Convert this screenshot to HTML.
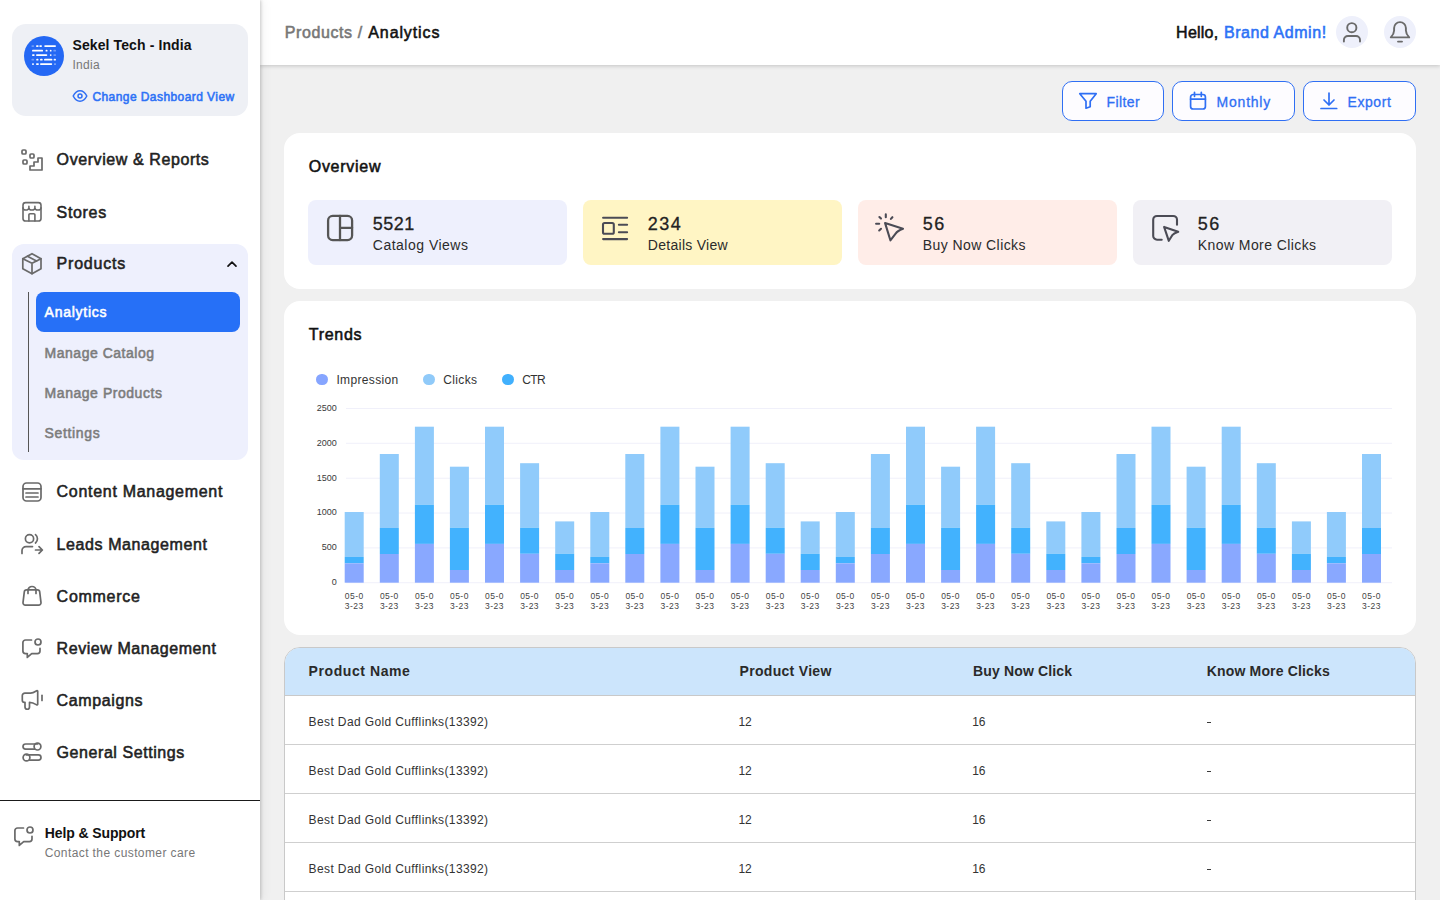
<!DOCTYPE html>
<html><head><meta charset="utf-8"><title>Products / Analytics</title>
<style>
html,body{margin:0;padding:0;width:1440px;height:900px;overflow:hidden;background:#f0f0f0;font-family:"Liberation Sans",sans-serif}
.t{position:absolute;white-space:nowrap}
.b{position:absolute}
.yl{font-family:"Liberation Sans",sans-serif;font-size:9px;fill:#3a3a3a}
.xl{font-family:"Liberation Sans",sans-serif;font-size:8.5px;letter-spacing:0.45px;fill:#444}
</style></head><body>
<div class="b" style="left:0px;top:0px;width:260px;height:900px;background:#fff;box-shadow:1px 0 3px rgba(0,0,0,0.18), 3px 0 10px rgba(0,0,0,0.06);z-index:2"></div>
<div style="position:absolute;left:0;top:0;width:260px;height:900px;z-index:3">
<div class="b" style="left:12px;top:24px;width:236px;height:92px;background:#eef0f5;border-radius:14px"></div>
<div class="b" style="left:24px;top:36px;width:40px;height:40px;background:#2468f4;border-radius:50%"></div>
<svg class="b" style="left:24px;top:36px;" width="40" height="40" viewBox="0 0 40 40" fill="none"><path d="M9.3 10.1H8.3" stroke="#fff" stroke-width="1.8" stroke-linecap="round" opacity="0.35"/><path d="M12.9 10.1H13.8" stroke="#fff" stroke-width="1.8" stroke-linecap="round" opacity="1"/><path d="M16.2 10.1H17.1" stroke="#fff" stroke-width="1.8" stroke-linecap="round" opacity="1"/><path d="M21.1 10.1H31.1" stroke="#fff" stroke-width="1.8" stroke-linecap="round" opacity="1"/><path d="M8.9 14.7H18.2" stroke="#fff" stroke-width="1.8" stroke-linecap="round" opacity="1"/><path d="M22.7 14.7H22.4" stroke="#fff" stroke-width="1.8" stroke-linecap="round" opacity="1"/><path d="M26.7 14.7H26.7" stroke="#fff" stroke-width="1.8" stroke-linecap="round" opacity="1"/><path d="M31.2 14.7H30.2" stroke="#fff" stroke-width="1.8" stroke-linecap="round" opacity="0.35"/><path d="M8.9 19.1H9.8" stroke="#fff" stroke-width="1.8" stroke-linecap="round" opacity="1"/><path d="M12.9 19.1H22.4" stroke="#fff" stroke-width="1.8" stroke-linecap="round" opacity="1"/><path d="M26.7 19.1H26.7" stroke="#fff" stroke-width="1.8" stroke-linecap="round" opacity="1"/><path d="M31.2 19.1H30.2" stroke="#fff" stroke-width="1.8" stroke-linecap="round" opacity="0.35"/><path d="M9.3 23.7H8.3" stroke="#fff" stroke-width="1.8" stroke-linecap="round" opacity="0.35"/><path d="M13.6 23.7H13.1" stroke="#fff" stroke-width="1.8" stroke-linecap="round" opacity="1"/><path d="M16.9 23.7H17.8" stroke="#fff" stroke-width="1.8" stroke-linecap="round" opacity="1"/><path d="M20.9 23.7H27.5" stroke="#fff" stroke-width="1.8" stroke-linecap="round" opacity="1"/><path d="M30.5 23.7H31.1" stroke="#fff" stroke-width="1.8" stroke-linecap="round" opacity="1"/><path d="M8.9 28.1H9.1" stroke="#fff" stroke-width="1.8" stroke-linecap="round" opacity="1"/><path d="M12.9 28.1H14.0" stroke="#fff" stroke-width="1.8" stroke-linecap="round" opacity="1"/><path d="M16.9 28.1H27.3" stroke="#fff" stroke-width="1.8" stroke-linecap="round" opacity="1"/><path d="M30.9 28.1H31.1" stroke="#fff" stroke-width="1.8" stroke-linecap="round" opacity="0.5"/></svg>
<div class="t" style="left:72.5px;top:36.05px;font-size:14px;line-height:18px;font-weight:700;color:#111;letter-spacing:0.106px;">Sekel Tech - India</div>
<div class="t" style="left:72.4px;top:57.74px;font-size:12px;line-height:15px;font-weight:400;color:#777;letter-spacing:0.3px;">India</div>
<svg class="b" style="left:72px;top:89px;" width="16" height="14" viewBox="0 0 16 14" fill="none"><path d="M1.2 7C3 3.4 5.3 1.8 8 1.8S13 3.4 14.8 7C13 10.6 10.7 12.2 8 12.2S3 10.6 1.2 7Z" stroke="#2f6ff4" stroke-width="1.5"/><circle cx="8" cy="7" r="2" stroke="#2f6ff4" stroke-width="1.5"/></svg>
<div class="t" style="left:92.4px;top:89.74px;font-size:12px;line-height:15px;font-weight:400;-webkit-text-stroke:0.55px #2d72f6;color:#2d72f6;letter-spacing:0.43px;">Change Dashboard View</div>
<svg class="b" style="left:18px;top:146px;" width="30" height="30" viewBox="0 0 30 30" fill="none"><g stroke="#6a6a6a" stroke-width="1.7" stroke-linecap="round" stroke-linejoin="round"><rect x="4" y="4" width="4" height="4" rx="1"/><rect x="12" y="8" width="4" height="4" rx="1"/><rect x="5" y="14" width="4" height="4" rx="1"/><path d="M12 24H24V12H20V16H16V20H12Z"/></g></svg>
<div class="t" style="left:56.6px;top:150.36px;font-size:16px;line-height:20px;font-weight:400;-webkit-text-stroke:0.55px #222;color:#222;letter-spacing:0.588px;">Overview &amp; Reports</div>
<svg class="b" style="left:20px;top:199px;" width="24" height="24" viewBox="0 0 24 24" fill="none"><g stroke="#6a6a6a" stroke-width="1.6" stroke-linecap="round" stroke-linejoin="round"><rect x="3" y="3.65" width="18" height="18.35" rx="2.6"/><path d="M3 8.7A2.95 2.3 0 0 0 8.9 8.7V7.4M8.9 8.7A3 2.3 0 0 0 14.9 8.7V7.4M14.9 8.7A3.05 2.3 0 0 0 21 8.7"/><path d="M8.9 22V15.9a1.1 1.1 0 0 1 1.1-1.1H13.8a1.1 1.1 0 0 1 1.1 1.1V22"/></g></svg>
<div class="t" style="left:56.6px;top:202.56px;font-size:16px;line-height:20px;font-weight:400;-webkit-text-stroke:0.55px #222;color:#222;letter-spacing:0.66px;">Stores</div>
<div class="b" style="left:12px;top:244px;width:236px;height:216px;background:#eef0fd;border-radius:12px"></div>
<svg class="b" style="left:18px;top:249px;" width="30" height="30" viewBox="0 0 30 30" fill="none"><g stroke="#6a6a6a" stroke-width="1.7" stroke-linecap="round" stroke-linejoin="round"><path d="M14 4.7L23 9.7V19.7L14 24.7L4.8 19.7V9.7Z"/><path d="M4.8 9.7L14 14.3L23 9.7M14 14.3V24.7"/><path d="M9.5 7.2L18.5 12"/></g></svg>
<div class="t" style="left:56.6px;top:254.36px;font-size:16px;line-height:20px;font-weight:400;-webkit-text-stroke:0.55px #222;color:#222;letter-spacing:0.786px;">Products</div>
<svg class="b" style="left:216px;top:252px;" width="30" height="24" viewBox="0 0 30 24" fill="none"><path d="M12 14.1L16 10.1L20 14.1" stroke="#111" stroke-width="1.7" stroke-linecap="round" stroke-linejoin="round"/></svg>
<div class="b" style="left:27.5px;top:292px;width:1.2px;height:160px;background:#555"></div>
<div class="b" style="left:36px;top:292px;width:204px;height:40px;background:#2670f7;border-radius:8px"></div>
<div class="t" style="left:44.6px;top:303.35px;font-size:14px;line-height:18px;font-weight:400;-webkit-text-stroke:0.55px #fff;color:#fff;letter-spacing:0.75px;">Analytics</div>
<div class="t" style="left:44.6px;top:344.25px;font-size:14px;line-height:18px;font-weight:400;-webkit-text-stroke:0.55px #7c7c7c;color:#7c7c7c;letter-spacing:0.515px;">Manage Catalog</div>
<div class="t" style="left:44.6px;top:384.35px;font-size:14px;line-height:18px;font-weight:400;-webkit-text-stroke:0.55px #7c7c7c;color:#7c7c7c;letter-spacing:0.543px;">Manage Products</div>
<div class="t" style="left:44.6px;top:424.05px;font-size:14px;line-height:18px;font-weight:400;-webkit-text-stroke:0.55px #7c7c7c;color:#7c7c7c;letter-spacing:0.643px;">Settings</div>
<svg class="b" style="left:18px;top:477px;" width="30" height="30" viewBox="0 0 30 30" fill="none"><g stroke="#6a6a6a" stroke-width="1.7" stroke-linecap="round" stroke-linejoin="round"><rect x="5" y="6" width="18" height="18" rx="3.5"/><path d="M5 11.8H23M8 16H20M8 20H20"/></g></svg>
<div class="t" style="left:56.6px;top:482.26px;font-size:16px;line-height:20px;font-weight:400;-webkit-text-stroke:0.55px #222;color:#222;letter-spacing:0.7px;">Content Management</div>
<svg class="b" style="left:18px;top:529px;" width="30" height="30" viewBox="0 0 30 30" fill="none"><g stroke="#6a6a6a" stroke-width="1.7" stroke-linecap="round" stroke-linejoin="round"><circle cx="11.5" cy="9.8" r="4.1"/><path d="M17.5 5.6c2.6 2.2 2.6 6.2 0 8.4"/><path d="M4 24.5V21.6a4 4 0 0 1 4-4H14.5"/><path d="M17.5 21H24.3M21 17.6L24.4 21L21 24.4"/></g></svg>
<div class="t" style="left:56.6px;top:534.56px;font-size:16px;line-height:20px;font-weight:400;-webkit-text-stroke:0.55px #222;color:#222;letter-spacing:0.593px;">Leads Management</div>
<svg class="b" style="left:18px;top:581px;" width="30" height="30" viewBox="0 0 30 30" fill="none"><g stroke="#6a6a6a" stroke-width="1.7" stroke-linecap="round" stroke-linejoin="round"><path d="M8.6 8.8H19.4a2.3 2.3 0 0 1 2.3 2.1L23 21.6a2.4 2.4 0 0 1-2.4 2.6H7.4A2.4 2.4 0 0 1 5 21.6L6.3 10.9A2.3 2.3 0 0 1 8.6 8.8Z"/><path d="M10 12.5V9.5a4 4 0 0 1 8 0V12.5"/></g></svg>
<div class="t" style="left:56.6px;top:586.56px;font-size:16px;line-height:20px;font-weight:400;-webkit-text-stroke:0.55px #222;color:#222;letter-spacing:0.729px;">Commerce</div>
<svg class="b" style="left:18px;top:633px;" width="30" height="30" viewBox="0 0 30 30" fill="none"><g stroke="#6a6a6a" stroke-width="1.7" stroke-linecap="round" stroke-linejoin="round"><path d="M13.5 7H7.5A2.6 2.6 0 0 0 4.9 9.6V18A2.6 2.6 0 0 0 7.5 20.6H9.3V24.4L13.7 20.6H19.4A2.6 2.6 0 0 0 22 18V15.3"/><circle cx="20" cy="9" r="3"/></g></svg>
<div class="t" style="left:56.6px;top:638.56px;font-size:16px;line-height:20px;font-weight:400;-webkit-text-stroke:0.55px #222;color:#222;letter-spacing:0.562px;">Review Management</div>
<svg class="b" style="left:18px;top:685px;" width="30" height="30" viewBox="0 0 30 30" fill="none"><g stroke="#6a6a6a" stroke-width="1.7" stroke-linecap="round" stroke-linejoin="round"><path d="M19.7 6.3V19.3c0 .5-.5.8-1 .6C16.5 18.5 14 17.3 11.5 17.3V22a2.25 2.25 0 0 1-4.5 0V17.3H6.4A2.1 2.1 0 0 1 4.3 15.2V10.7A2.6 2.6 0 0 1 6.9 8.1H12.5C14.5 8.1 16.5 7 18.7 5.7c.5-.3 1 0 1 .6Z"/><path d="M24 10.3V15.5"/></g></svg>
<div class="t" style="left:56.6px;top:690.56px;font-size:16px;line-height:20px;font-weight:400;-webkit-text-stroke:0.55px #222;color:#222;letter-spacing:0.613px;">Campaigns</div>
<svg class="b" style="left:18px;top:737px;" width="30" height="30" viewBox="0 0 30 30" fill="none"><g stroke="#6a6a6a" stroke-width="1.7" stroke-linecap="round" stroke-linejoin="round"><path d="M19.5 7H7.6a2.6 2.6 0 0 0 0 5.2H16.3"/><circle cx="19.5" cy="9.6" r="3.4"/><path d="M8.5 17.9H20.4a2.6 2.6 0 0 1 0 5.2H11.7"/><circle cx="8.5" cy="20.5" r="3.4"/></g></svg>
<div class="t" style="left:56.6px;top:742.56px;font-size:16px;line-height:20px;font-weight:400;-webkit-text-stroke:0.55px #222;color:#222;letter-spacing:0.567px;">General Settings</div>
<div class="b" style="left:0px;top:800px;width:260px;height:1px;background:#1a1a1a"></div>
<svg class="b" style="left:10px;top:821px;" width="30" height="30" viewBox="0 0 30 30" fill="none"><g stroke="#6a6a6a" stroke-width="1.7" stroke-linecap="round" stroke-linejoin="round"><path d="M13.5 7H7.5A2.6 2.6 0 0 0 4.9 9.6V18A2.6 2.6 0 0 0 7.5 20.6H9.3V24.4L13.7 20.6H19.4A2.6 2.6 0 0 0 22 18V15.3"/><circle cx="20" cy="9" r="3"/></g></svg>
<div class="t" style="left:44.7px;top:824.25px;font-size:14px;line-height:18px;font-weight:700;color:#111;letter-spacing:-0.1px;">Help &amp; Support</div>
<div class="t" style="left:44.7px;top:845.84px;font-size:12px;line-height:15px;font-weight:400;color:#777;letter-spacing:0.404px;">Contact the customer care</div>
</div>
<div class="b" style="left:260px;top:0px;width:1180px;height:65px;background:#fff;box-shadow:0 1px 4px rgba(0,0,0,0.19);z-index:1"></div>
<div style="position:absolute;left:0;top:0;width:1440px;height:65px;z-index:1">
<div class="t" style="left:284.7px;top:23.06px;font-size:16px;line-height:20px;font-weight:400;-webkit-text-stroke:0.55px #777;color:#777;letter-spacing:0.611px;">Products /</div>
<div class="t" style="left:368.3px;top:23.06px;font-size:16px;line-height:20px;font-weight:400;-webkit-text-stroke:0.55px #111;color:#111;letter-spacing:0.887px;">Analytics</div>
<div class="t" style="left:1176.1px;top:22.96px;font-size:16px;line-height:20px;font-weight:400;-webkit-text-stroke:0.55px #111;color:#111;letter-spacing:0.24px;">Hello,</div>
<div class="t" style="left:1223.9px;top:22.96px;font-size:16px;line-height:20px;font-weight:400;-webkit-text-stroke:0.55px #2d72f6;color:#2d72f6;letter-spacing:0.564px;">Brand Admin!</div>
<div class="b" style="left:1336px;top:16px;width:32px;height:32px;background:#eef0fb;border-radius:50%"></div>
<div class="b" style="left:1384px;top:16px;width:32px;height:32px;background:#eef0fb;border-radius:50%"></div>
<svg class="b" style="left:1336px;top:16px;" width="80" height="32" viewBox="0 0 80 32" fill="none"><g stroke="#6a6a6a" stroke-width="1.9" stroke-linecap="round" stroke-linejoin="round"><circle cx="15.8" cy="11.7" r="4.6"/><path d="M7.9 25.6V24a4 4 0 0 1 4-4H20a4 4 0 0 1 4 4V25.6"/><path d="M64 6.1a5.9 5.9 0 0 0-5.9 5.9V14.6c0 2.6-1.4 4.8-3.3 6.8H73.2c-1.9-2-3.3-4.2-3.3-6.8V12A5.9 5.9 0 0 0 64 6.1Z"/><path d="M62 25.6H66"/></g></svg>
</div>
<div style="position:absolute;left:260px;top:65px;width:1180px;height:835px;background:#f0f0f0;z-index:0"></div>
<div class="b" style="left:1062px;top:81px;width:102px;height:40px;box-sizing:border-box;border:1.2px solid #2f6ff4;border-radius:10px;background:#fdfcff"></div>
<svg class="b" style="left:1074px;top:86px;" width="30" height="30" viewBox="0 0 30 30" fill="none"><g stroke="#2f6ff4" stroke-width="1.7" stroke-linecap="round" stroke-linejoin="round"><path d="M5.8 7.7H22.2L16.2 15.3V20.8L12 22.2V15.3Z"/></g></svg>
<div class="t" style="left:1106.5px;top:92.75px;font-size:14px;line-height:18px;font-weight:400;-webkit-text-stroke:0.3px #2f6ff4;color:#2f6ff4;letter-spacing:0.42px;">Filter</div>
<div class="b" style="left:1172px;top:81px;width:123px;height:40px;box-sizing:border-box;border:1.2px solid #2f6ff4;border-radius:10px;background:#fdfcff"></div>
<svg class="b" style="left:1184px;top:86px;" width="30" height="30" viewBox="0 0 30 30" fill="none"><g stroke="#2f6ff4" stroke-width="1.7" stroke-linecap="round" stroke-linejoin="round"><rect x="6.6" y="8.5" width="14.8" height="14.5" rx="2.6"/><path d="M6.6 13.2H21.4M10.5 6.3V10.3M17.3 6.3V10.3"/></g></svg>
<div class="t" style="left:1216.6px;top:92.75px;font-size:14px;line-height:18px;font-weight:400;-webkit-text-stroke:0.3px #2f6ff4;color:#2f6ff4;letter-spacing:0.767px;">Monthly</div>
<div class="b" style="left:1303px;top:81px;width:113px;height:40px;box-sizing:border-box;border:1.2px solid #2f6ff4;border-radius:10px;background:#fdfcff"></div>
<svg class="b" style="left:1314px;top:86px;" width="30" height="30" viewBox="0 0 30 30" fill="none"><g stroke="#2f6ff4" stroke-width="1.7" stroke-linecap="round" stroke-linejoin="round"><path d="M15 7V19M10 14L15 19L20 14M7 22.5H22.7"/></g></svg>
<div class="t" style="left:1347.5px;top:92.75px;font-size:14px;line-height:18px;font-weight:400;-webkit-text-stroke:0.3px #2f6ff4;color:#2f6ff4;letter-spacing:0.58px;">Export</div>
<div class="b" style="left:284px;top:133px;width:1132px;height:156px;background:#fff;border-radius:16px"></div>
<div class="t" style="left:308.7px;top:156.86px;font-size:16px;line-height:20px;font-weight:400;-webkit-text-stroke:0.55px #111;color:#111;letter-spacing:0.743px;">Overview</div>
<div class="b" style="left:308px;top:200px;width:259px;height:65px;background:#eef0fd;border-radius:8px"></div>
<svg class="b" style="left:320px;top:208px;" width="40" height="40" viewBox="0 0 40 40" fill="none"><g stroke="#555" stroke-width="2.3" stroke-linecap="round" stroke-linejoin="round"><rect x="8.1" y="7.9" width="24" height="24.2" rx="4.6"/><path d="M20 7.9V32.1M20 19.8H32.1"/></g></svg>
<div class="t" style="left:372.8px;top:212.76px;font-size:18px;line-height:22px;font-weight:400;-webkit-text-stroke:0.3px #222;color:#222;letter-spacing:0.433px;">5521</div>
<div class="t" style="left:372.8px;top:235.75px;font-size:14px;line-height:18px;font-weight:400;color:#2b2b2b;letter-spacing:0.492px;">Catalog Views</div>
<div class="b" style="left:583px;top:200px;width:259px;height:65px;background:#fff5c4;border-radius:8px"></div>
<svg class="b" style="left:596px;top:208px;" width="40" height="40" viewBox="0 0 40 40" fill="none"><g stroke="#4b4b55" stroke-width="2.1" stroke-linecap="round" stroke-linejoin="round"><path d="M7.1 9.8H31.1M7.1 31.1H31.1M22.9 16.8H31.1M22.9 24.2H31.1"/><rect x="7" y="15" width="10.8" height="10.8" rx="1.6"/></g></svg>
<div class="t" style="left:647.8px;top:212.76px;font-size:18px;line-height:22px;font-weight:400;-webkit-text-stroke:0.3px #222;color:#222;letter-spacing:1.5px;">234</div>
<div class="t" style="left:647.8px;top:235.75px;font-size:14px;line-height:18px;font-weight:400;color:#2b2b2b;letter-spacing:0.282px;">Details View</div>
<div class="b" style="left:858px;top:200px;width:259px;height:65px;background:#ffede8;border-radius:8px"></div>
<svg class="b" style="left:870px;top:208px;" width="40" height="40" viewBox="0 0 40 40" fill="none"><g stroke="#4b4b55" stroke-width="2.1" stroke-linecap="round" stroke-linejoin="round"><path d="M15.1 15.1L33 20.7C29 22.3 26.9 23.4 25.8 25.4L20.4 32.3Z"/><path d="M15.8 6.4V9.2M9.4 9L11 10.6M22.4 9.2L20.9 10.9M6.1 15.8H9.2M9.2 22.5L11 20.8"/></g></svg>
<div class="t" style="left:922.8px;top:212.76px;font-size:18px;line-height:22px;font-weight:400;-webkit-text-stroke:0.3px #222;color:#222;letter-spacing:1.4px;">56</div>
<div class="t" style="left:922.8px;top:235.75px;font-size:14px;line-height:18px;font-weight:400;color:#2b2b2b;letter-spacing:0.423px;">Buy Now Clicks</div>
<div class="b" style="left:1133px;top:200px;width:259px;height:65px;background:#f1f0f5;border-radius:8px"></div>
<svg class="b" style="left:1145px;top:208px;" width="40" height="40" viewBox="0 0 40 40" fill="none"><g stroke="#4b4b55" stroke-width="2.1" stroke-linecap="round" stroke-linejoin="round"><path d="M16.7 31.7H12A3.8 3.8 0 0 1 8.2 27.9V11.8A3.8 3.8 0 0 1 12 8H28.2A3.8 3.8 0 0 1 32 11.8V16.7"/><path d="M19.1 18.9L33.2 23.8C30.2 24.9 28.4 25.8 27.6 26.8L23.8 32.8Z"/></g></svg>
<div class="t" style="left:1197.8px;top:212.76px;font-size:18px;line-height:22px;font-weight:400;-webkit-text-stroke:0.3px #222;color:#222;letter-spacing:1.4px;">56</div>
<div class="t" style="left:1197.8px;top:235.75px;font-size:14px;line-height:18px;font-weight:400;color:#2b2b2b;letter-spacing:0.42px;">Know More Clicks</div>
<div class="b" style="left:284px;top:301px;width:1132px;height:334px;background:#fff;border-radius:16px"></div>
<div class="t" style="left:308.8px;top:325.06px;font-size:16px;line-height:20px;font-weight:400;-webkit-text-stroke:0.55px #111;color:#111;letter-spacing:0.7px;">Trends</div>
<div class="b" style="left:316.1px;top:373.7px;width:11.8px;height:11.8px;background:#86a5ff;border-radius:50%"></div>
<div class="t" style="left:336.4px;top:372.79px;font-size:12px;line-height:15px;font-weight:400;color:#333;letter-spacing:0.344px;">Impression</div>
<div class="b" style="left:423.0px;top:373.7px;width:11.8px;height:11.8px;background:#90caf9;border-radius:50%"></div>
<div class="t" style="left:443.3px;top:372.79px;font-size:12px;line-height:15px;font-weight:400;color:#333;letter-spacing:0.34px;">Clicks</div>
<div class="b" style="left:502.0px;top:373.7px;width:11.8px;height:11.8px;background:#41b0fd;border-radius:50%"></div>
<div class="t" style="left:522.2px;top:372.79px;font-size:12px;line-height:15px;font-weight:400;color:#333;letter-spacing:-0.55px;">CTR</div>
<svg class="b" style="left:0;top:0" width="1440" height="900" viewBox="0 0 1440 900"><line x1="346" y1="582.7" x2="1392" y2="582.7" stroke="#f0f0fa" stroke-width="1"/>
<text x="336.7" y="585.0" text-anchor="end" class="yl">0</text>
<line x1="346" y1="547.9" x2="1392" y2="547.9" stroke="#f0f0fa" stroke-width="1"/>
<text x="336.7" y="550.2" text-anchor="end" class="yl">500</text>
<line x1="346" y1="513.0" x2="1392" y2="513.0" stroke="#f0f0fa" stroke-width="1"/>
<text x="336.7" y="515.3" text-anchor="end" class="yl">1000</text>
<line x1="346" y1="478.2" x2="1392" y2="478.2" stroke="#f0f0fa" stroke-width="1"/>
<text x="336.7" y="480.5" text-anchor="end" class="yl">1500</text>
<line x1="346" y1="443.3" x2="1392" y2="443.3" stroke="#f0f0fa" stroke-width="1"/>
<text x="336.7" y="445.6" text-anchor="end" class="yl">2000</text>
<line x1="346" y1="408.5" x2="1392" y2="408.5" stroke="#f0f0fa" stroke-width="1"/>
<text x="336.7" y="410.8" text-anchor="end" class="yl">2500</text>
<rect x="344.7" y="512.0" width="19.0" height="44.9" fill="#90cbfb"/>
<rect x="344.7" y="556.9" width="19.0" height="6.4" fill="#42b2fe"/>
<rect x="344.7" y="563.3" width="19.0" height="19.4" fill="#89a8ff"/>
<text x="344.8" y="598.9" class="xl">05-0</text>
<text x="344.8" y="608.9" class="xl">3-23</text>
<rect x="379.8" y="454.0" width="19.0" height="74.0" fill="#90cbfb"/>
<rect x="379.8" y="528.0" width="19.0" height="26.0" fill="#42b2fe"/>
<rect x="379.8" y="554.0" width="19.0" height="28.7" fill="#89a8ff"/>
<text x="379.9" y="598.9" class="xl">05-0</text>
<text x="379.9" y="608.9" class="xl">3-23</text>
<rect x="414.9" y="426.7" width="19.0" height="78.1" fill="#90cbfb"/>
<rect x="414.9" y="504.8" width="19.0" height="39.1" fill="#42b2fe"/>
<rect x="414.9" y="543.9" width="19.0" height="38.8" fill="#89a8ff"/>
<text x="415.0" y="598.9" class="xl">05-0</text>
<text x="415.0" y="608.9" class="xl">3-23</text>
<rect x="449.9" y="466.7" width="19.0" height="61.1" fill="#90cbfb"/>
<rect x="449.9" y="527.8" width="19.0" height="42.2" fill="#42b2fe"/>
<rect x="449.9" y="570.0" width="19.0" height="12.7" fill="#89a8ff"/>
<text x="450.0" y="598.9" class="xl">05-0</text>
<text x="450.0" y="608.9" class="xl">3-23</text>
<rect x="485.0" y="426.7" width="19.0" height="78.1" fill="#90cbfb"/>
<rect x="485.0" y="504.8" width="19.0" height="39.1" fill="#42b2fe"/>
<rect x="485.0" y="543.9" width="19.0" height="38.8" fill="#89a8ff"/>
<text x="485.1" y="598.9" class="xl">05-0</text>
<text x="485.1" y="608.9" class="xl">3-23</text>
<rect x="520.1" y="463.2" width="19.0" height="64.6" fill="#90cbfb"/>
<rect x="520.1" y="527.8" width="19.0" height="26.0" fill="#42b2fe"/>
<rect x="520.1" y="553.8" width="19.0" height="28.9" fill="#89a8ff"/>
<text x="520.2" y="598.9" class="xl">05-0</text>
<text x="520.2" y="608.9" class="xl">3-23</text>
<rect x="555.2" y="521.4" width="19.0" height="32.4" fill="#90cbfb"/>
<rect x="555.2" y="553.8" width="19.0" height="16.2" fill="#42b2fe"/>
<rect x="555.2" y="570.0" width="19.0" height="12.7" fill="#89a8ff"/>
<text x="555.3" y="598.9" class="xl">05-0</text>
<text x="555.3" y="608.9" class="xl">3-23</text>
<rect x="590.3" y="512.0" width="19.0" height="44.9" fill="#90cbfb"/>
<rect x="590.3" y="556.9" width="19.0" height="6.4" fill="#42b2fe"/>
<rect x="590.3" y="563.3" width="19.0" height="19.4" fill="#89a8ff"/>
<text x="590.4" y="598.9" class="xl">05-0</text>
<text x="590.4" y="608.9" class="xl">3-23</text>
<rect x="625.3" y="454.0" width="19.0" height="74.0" fill="#90cbfb"/>
<rect x="625.3" y="528.0" width="19.0" height="26.0" fill="#42b2fe"/>
<rect x="625.3" y="554.0" width="19.0" height="28.7" fill="#89a8ff"/>
<text x="625.4" y="598.9" class="xl">05-0</text>
<text x="625.4" y="608.9" class="xl">3-23</text>
<rect x="660.4" y="426.7" width="19.0" height="78.1" fill="#90cbfb"/>
<rect x="660.4" y="504.8" width="19.0" height="39.1" fill="#42b2fe"/>
<rect x="660.4" y="543.9" width="19.0" height="38.8" fill="#89a8ff"/>
<text x="660.5" y="598.9" class="xl">05-0</text>
<text x="660.5" y="608.9" class="xl">3-23</text>
<rect x="695.5" y="466.7" width="19.0" height="61.1" fill="#90cbfb"/>
<rect x="695.5" y="527.8" width="19.0" height="42.2" fill="#42b2fe"/>
<rect x="695.5" y="570.0" width="19.0" height="12.7" fill="#89a8ff"/>
<text x="695.6" y="598.9" class="xl">05-0</text>
<text x="695.6" y="608.9" class="xl">3-23</text>
<rect x="730.6" y="426.7" width="19.0" height="78.1" fill="#90cbfb"/>
<rect x="730.6" y="504.8" width="19.0" height="39.1" fill="#42b2fe"/>
<rect x="730.6" y="543.9" width="19.0" height="38.8" fill="#89a8ff"/>
<text x="730.7" y="598.9" class="xl">05-0</text>
<text x="730.7" y="608.9" class="xl">3-23</text>
<rect x="765.7" y="463.2" width="19.0" height="64.6" fill="#90cbfb"/>
<rect x="765.7" y="527.8" width="19.0" height="26.0" fill="#42b2fe"/>
<rect x="765.7" y="553.8" width="19.0" height="28.9" fill="#89a8ff"/>
<text x="765.8" y="598.9" class="xl">05-0</text>
<text x="765.8" y="608.9" class="xl">3-23</text>
<rect x="800.7" y="521.4" width="19.0" height="32.4" fill="#90cbfb"/>
<rect x="800.7" y="553.8" width="19.0" height="16.2" fill="#42b2fe"/>
<rect x="800.7" y="570.0" width="19.0" height="12.7" fill="#89a8ff"/>
<text x="800.8" y="598.9" class="xl">05-0</text>
<text x="800.8" y="608.9" class="xl">3-23</text>
<rect x="835.8" y="512.0" width="19.0" height="44.9" fill="#90cbfb"/>
<rect x="835.8" y="556.9" width="19.0" height="6.4" fill="#42b2fe"/>
<rect x="835.8" y="563.3" width="19.0" height="19.4" fill="#89a8ff"/>
<text x="835.9" y="598.9" class="xl">05-0</text>
<text x="835.9" y="608.9" class="xl">3-23</text>
<rect x="870.9" y="454.0" width="19.0" height="74.0" fill="#90cbfb"/>
<rect x="870.9" y="528.0" width="19.0" height="26.0" fill="#42b2fe"/>
<rect x="870.9" y="554.0" width="19.0" height="28.7" fill="#89a8ff"/>
<text x="871.0" y="598.9" class="xl">05-0</text>
<text x="871.0" y="608.9" class="xl">3-23</text>
<rect x="906.0" y="426.7" width="19.0" height="78.1" fill="#90cbfb"/>
<rect x="906.0" y="504.8" width="19.0" height="39.1" fill="#42b2fe"/>
<rect x="906.0" y="543.9" width="19.0" height="38.8" fill="#89a8ff"/>
<text x="906.1" y="598.9" class="xl">05-0</text>
<text x="906.1" y="608.9" class="xl">3-23</text>
<rect x="941.1" y="466.7" width="19.0" height="61.1" fill="#90cbfb"/>
<rect x="941.1" y="527.8" width="19.0" height="42.2" fill="#42b2fe"/>
<rect x="941.1" y="570.0" width="19.0" height="12.7" fill="#89a8ff"/>
<text x="941.2" y="598.9" class="xl">05-0</text>
<text x="941.2" y="608.9" class="xl">3-23</text>
<rect x="976.1" y="426.7" width="19.0" height="78.1" fill="#90cbfb"/>
<rect x="976.1" y="504.8" width="19.0" height="39.1" fill="#42b2fe"/>
<rect x="976.1" y="543.9" width="19.0" height="38.8" fill="#89a8ff"/>
<text x="976.2" y="598.9" class="xl">05-0</text>
<text x="976.2" y="608.9" class="xl">3-23</text>
<rect x="1011.2" y="463.2" width="19.0" height="64.6" fill="#90cbfb"/>
<rect x="1011.2" y="527.8" width="19.0" height="26.0" fill="#42b2fe"/>
<rect x="1011.2" y="553.8" width="19.0" height="28.9" fill="#89a8ff"/>
<text x="1011.3" y="598.9" class="xl">05-0</text>
<text x="1011.3" y="608.9" class="xl">3-23</text>
<rect x="1046.3" y="521.4" width="19.0" height="32.4" fill="#90cbfb"/>
<rect x="1046.3" y="553.8" width="19.0" height="16.2" fill="#42b2fe"/>
<rect x="1046.3" y="570.0" width="19.0" height="12.7" fill="#89a8ff"/>
<text x="1046.4" y="598.9" class="xl">05-0</text>
<text x="1046.4" y="608.9" class="xl">3-23</text>
<rect x="1081.4" y="512.0" width="19.0" height="44.9" fill="#90cbfb"/>
<rect x="1081.4" y="556.9" width="19.0" height="6.4" fill="#42b2fe"/>
<rect x="1081.4" y="563.3" width="19.0" height="19.4" fill="#89a8ff"/>
<text x="1081.5" y="598.9" class="xl">05-0</text>
<text x="1081.5" y="608.9" class="xl">3-23</text>
<rect x="1116.5" y="454.0" width="19.0" height="74.0" fill="#90cbfb"/>
<rect x="1116.5" y="528.0" width="19.0" height="26.0" fill="#42b2fe"/>
<rect x="1116.5" y="554.0" width="19.0" height="28.7" fill="#89a8ff"/>
<text x="1116.6" y="598.9" class="xl">05-0</text>
<text x="1116.6" y="608.9" class="xl">3-23</text>
<rect x="1151.5" y="426.7" width="19.0" height="78.1" fill="#90cbfb"/>
<rect x="1151.5" y="504.8" width="19.0" height="39.1" fill="#42b2fe"/>
<rect x="1151.5" y="543.9" width="19.0" height="38.8" fill="#89a8ff"/>
<text x="1151.6" y="598.9" class="xl">05-0</text>
<text x="1151.6" y="608.9" class="xl">3-23</text>
<rect x="1186.6" y="466.7" width="19.0" height="61.1" fill="#90cbfb"/>
<rect x="1186.6" y="527.8" width="19.0" height="42.2" fill="#42b2fe"/>
<rect x="1186.6" y="570.0" width="19.0" height="12.7" fill="#89a8ff"/>
<text x="1186.7" y="598.9" class="xl">05-0</text>
<text x="1186.7" y="608.9" class="xl">3-23</text>
<rect x="1221.7" y="426.7" width="19.0" height="78.1" fill="#90cbfb"/>
<rect x="1221.7" y="504.8" width="19.0" height="39.1" fill="#42b2fe"/>
<rect x="1221.7" y="543.9" width="19.0" height="38.8" fill="#89a8ff"/>
<text x="1221.8" y="598.9" class="xl">05-0</text>
<text x="1221.8" y="608.9" class="xl">3-23</text>
<rect x="1256.8" y="463.2" width="19.0" height="64.6" fill="#90cbfb"/>
<rect x="1256.8" y="527.8" width="19.0" height="26.0" fill="#42b2fe"/>
<rect x="1256.8" y="553.8" width="19.0" height="28.9" fill="#89a8ff"/>
<text x="1256.9" y="598.9" class="xl">05-0</text>
<text x="1256.9" y="608.9" class="xl">3-23</text>
<rect x="1291.9" y="521.4" width="19.0" height="32.4" fill="#90cbfb"/>
<rect x="1291.9" y="553.8" width="19.0" height="16.2" fill="#42b2fe"/>
<rect x="1291.9" y="570.0" width="19.0" height="12.7" fill="#89a8ff"/>
<text x="1292.0" y="598.9" class="xl">05-0</text>
<text x="1292.0" y="608.9" class="xl">3-23</text>
<rect x="1326.9" y="512.0" width="19.0" height="44.9" fill="#90cbfb"/>
<rect x="1326.9" y="556.9" width="19.0" height="6.4" fill="#42b2fe"/>
<rect x="1326.9" y="563.3" width="19.0" height="19.4" fill="#89a8ff"/>
<text x="1327.0" y="598.9" class="xl">05-0</text>
<text x="1327.0" y="608.9" class="xl">3-23</text>
<rect x="1362.0" y="454.0" width="19.0" height="74.0" fill="#90cbfb"/>
<rect x="1362.0" y="528.0" width="19.0" height="26.0" fill="#42b2fe"/>
<rect x="1362.0" y="554.0" width="19.0" height="28.7" fill="#89a8ff"/>
<text x="1362.1" y="598.9" class="xl">05-0</text>
<text x="1362.1" y="608.9" class="xl">3-23</text></svg>
<div class="b" style="left:284px;top:647px;width:1132px;height:300px;box-sizing:border-box;border:1px solid #c9c9c9;border-radius:16px;background:#fff;overflow:hidden"><div style="height:47px;background:#cce5fc;border-bottom:1px solid #c9c9c9"></div></div>
<div class="t" style="left:308.6px;top:662.15px;font-size:14px;line-height:18px;font-weight:700;color:#2a2a2a;letter-spacing:0.573px;">Product Name</div>
<div class="t" style="left:739.6px;top:662.15px;font-size:14px;line-height:18px;font-weight:700;color:#2a2a2a;letter-spacing:0.3px;">Product View</div>
<div class="t" style="left:973.1px;top:662.15px;font-size:14px;line-height:18px;font-weight:700;color:#2a2a2a;letter-spacing:0.142px;">Buy Now Click</div>
<div class="t" style="left:1206.8px;top:662.15px;font-size:14px;line-height:18px;font-weight:700;color:#2a2a2a;letter-spacing:0.16px;">Know More Clicks</div>
<div class="t" style="left:308.6px;top:715.04px;font-size:12px;line-height:15px;font-weight:400;color:#333;letter-spacing:0.379px;">Best Dad Gold Cufflinks(13392)</div>
<div class="t" style="left:738.6px;top:715.04px;font-size:12px;line-height:15px;font-weight:400;color:#333;letter-spacing:-0.3px;">12</div>
<div class="t" style="left:972.2px;top:715.04px;font-size:12px;line-height:15px;font-weight:400;color:#333;letter-spacing:-0.1px;">16</div>
<div class="b" style="left:1207px;top:721.7px;width:4px;height:1.4px;background:#3a3a3a"></div>
<div class="b" style="left:285px;top:744px;width:1130px;height:1px;background:#cfcfcf"></div>
<div class="t" style="left:308.6px;top:764.04px;font-size:12px;line-height:15px;font-weight:400;color:#333;letter-spacing:0.379px;">Best Dad Gold Cufflinks(13392)</div>
<div class="t" style="left:738.6px;top:764.04px;font-size:12px;line-height:15px;font-weight:400;color:#333;letter-spacing:-0.3px;">12</div>
<div class="t" style="left:972.2px;top:764.04px;font-size:12px;line-height:15px;font-weight:400;color:#333;letter-spacing:-0.1px;">16</div>
<div class="b" style="left:1207px;top:770.7px;width:4px;height:1.4px;background:#3a3a3a"></div>
<div class="b" style="left:285px;top:793px;width:1130px;height:1px;background:#cfcfcf"></div>
<div class="t" style="left:308.6px;top:813.04px;font-size:12px;line-height:15px;font-weight:400;color:#333;letter-spacing:0.379px;">Best Dad Gold Cufflinks(13392)</div>
<div class="t" style="left:738.6px;top:813.04px;font-size:12px;line-height:15px;font-weight:400;color:#333;letter-spacing:-0.3px;">12</div>
<div class="t" style="left:972.2px;top:813.04px;font-size:12px;line-height:15px;font-weight:400;color:#333;letter-spacing:-0.1px;">16</div>
<div class="b" style="left:1207px;top:819.7px;width:4px;height:1.4px;background:#3a3a3a"></div>
<div class="b" style="left:285px;top:842px;width:1130px;height:1px;background:#cfcfcf"></div>
<div class="t" style="left:308.6px;top:862.04px;font-size:12px;line-height:15px;font-weight:400;color:#333;letter-spacing:0.379px;">Best Dad Gold Cufflinks(13392)</div>
<div class="t" style="left:738.6px;top:862.04px;font-size:12px;line-height:15px;font-weight:400;color:#333;letter-spacing:-0.3px;">12</div>
<div class="t" style="left:972.2px;top:862.04px;font-size:12px;line-height:15px;font-weight:400;color:#333;letter-spacing:-0.1px;">16</div>
<div class="b" style="left:1207px;top:868.7px;width:4px;height:1.4px;background:#3a3a3a"></div>
<div class="b" style="left:285px;top:891px;width:1130px;height:1px;background:#cfcfcf"></div>
</body></html>
